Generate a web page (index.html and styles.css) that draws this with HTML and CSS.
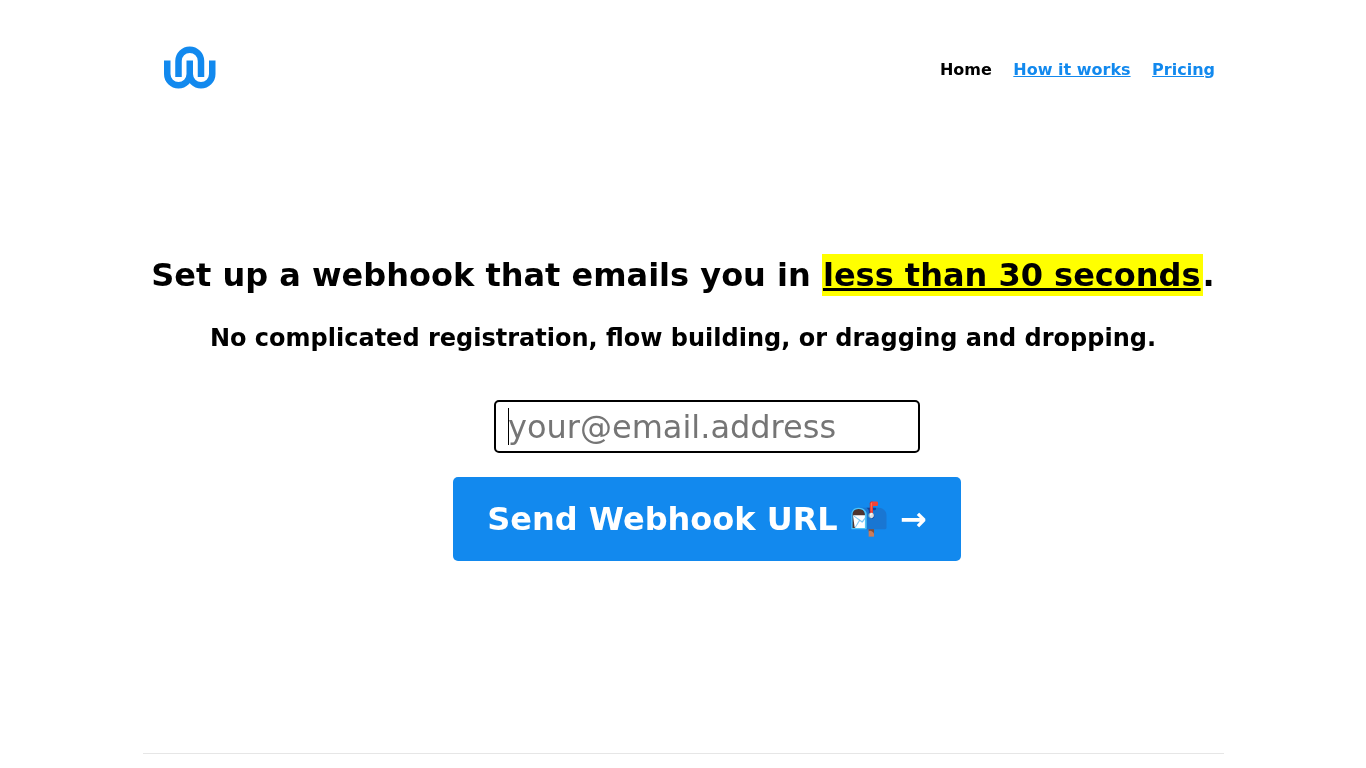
FILE: index.html
```html
<!DOCTYPE html>
<html lang="en">
<head>
    <meta charset="UTF-8">
    <meta name="viewport" content="width=device-width, initial-scale=1.0">
    <title>Webhook</title>
    <link rel="stylesheet" href="styles.css">
</head>
<body>
    <div class="container">
        <div class="header">
            <a class="logo" href="#">
                <svg width="52" height="44" viewBox="0 0 52 44" fill="none" stroke="#1289ee" stroke-width="6.500">
                    <path d="M3.250 14.500V28A11.250 11.250 0 0 0 25.750 28V14.500M25.750 28A11.250 11.250 0 0 0 48.250 28V14.500"/>
                    <path d="M14.500 31V15A11.250 11.250 0 0 1 37 15V31"/>
                </svg>
            </a>
            <ul class="nav">
                <li class="active">Home</li>
                <li><a href="#">How it works</a></li>
                <li><a href="#">Pricing</a></li>
            </ul>
        </div>
        <div class="hero">
            <h1>Set up a webhook that emails you in <mark><u>less than 30 seconds</u></mark>.</h1>
            <h2>No complicated registration, flow building, or dragging and dropping.</h2>
            <form class="signup">
                <div class="field">
                    <span class="caret"></span>
                    <input type="email" placeholder="your@email.address">
                </div>
                <button type="button">Send Webhook URL 📬 →</button>
            </form>
        </div>
        <hr>
    </div>
</body>
</html>
```

FILE: styles.css
```css
body{
    margin: 0;
    font-family: "DejaVu Sans", sans-serif;
    color: black;
    background: white;
    overflow: hidden;
}

.container{
    width: 1082px;
    margin: 0 auto;
    will-change: transform;
}

.header{
    display: flex;
    justify-content: space-between;
    align-items: center;
    height: 44px;
    padding: 46px 9px 0 22px;
}

.logo{
    display: block;
    height: 44px;
}

.nav{
    display: flex;
    gap: 21.500px;
    margin: 0;
    padding: 0;
    list-style: none;
    font-size: 16px;
    font-weight: bold;
    position: relative;
    top: 1px;
}

.nav a{
    color: #1289ee;
}

.hero{
    padding-top: 164px;
    text-align: center;
}

h1{
    margin: 0;
    font-size: 32px;
    line-height: 42px;
}

h1 mark{
    display: inline-block;
    padding: 0 2px 0 1px;
    background: yellow;
    color: black;
}

h2{
    margin: 21px 0 0;
    font-size: 24px;
    line-height: 42px;
}

.signup{
    display: flex;
    flex-direction: column;
    align-items: center;
    margin-top: 41px;
    padding-left: 48px;
}

.field{
    position: relative;
    width: 426px;
}

.field input{
    width: 100%;
    height: 53px;
    box-sizing: border-box;
    padding: 0 12px;
    border: 2px solid black;
    border-radius: 5px;
    outline: none;
    font-family: inherit;
    font-size: 32px;
    color: black;
}

.caret{
    position: absolute;
    left: 14px;
    top: 8px;
    width: 1px;
    height: 37px;
    background: black;
}

button{
    margin-top: 24px;
    width: 508px;
    height: 84px;
    border: 0;
    border-radius: 5px;
    background: #1289ee;
    color: white;
    font-family: inherit;
    font-size: 32px;
    font-weight: bold;
}

hr{
    height: 1px;
    margin: 192px 0 0 1px;
    border: 0;
    background: #e6e6e6;
}
```
